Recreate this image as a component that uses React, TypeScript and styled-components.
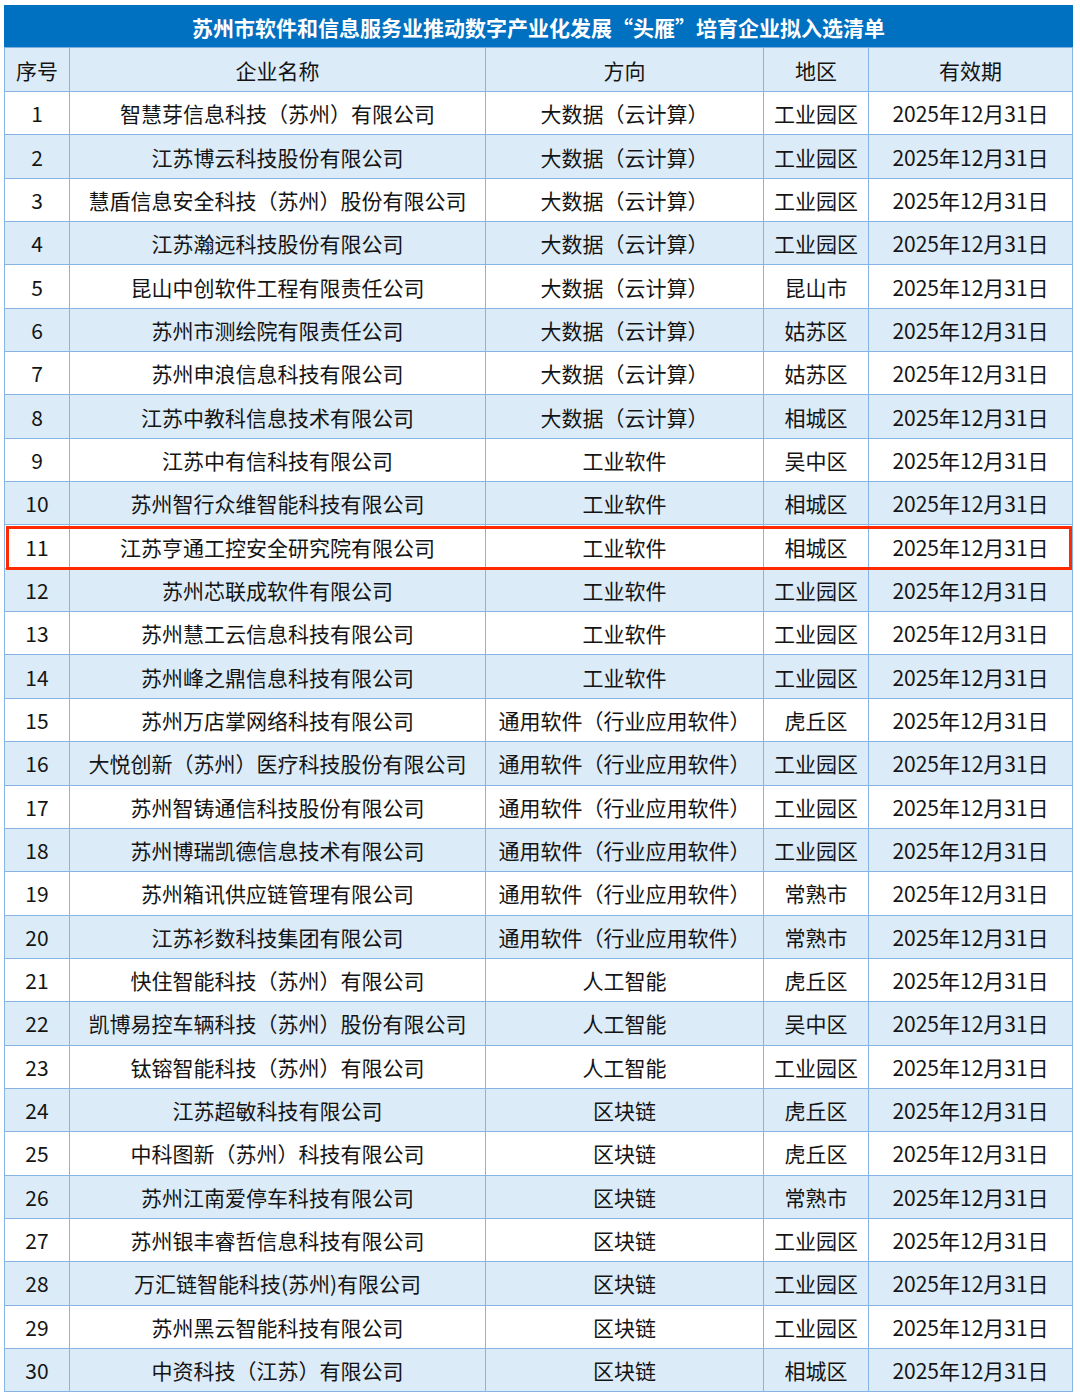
import styled, { createGlobalStyle } from "styled-components";

const GlobalStyle = createGlobalStyle`
  body {
    margin: 0;
    background: #ffffff;
    font-family: "Noto Sans CJK SC", "Noto Sans", sans-serif;
  }
`;

const ROW_H = 43.35;
const TITLE_H = 41;
const HEAD_H = 43;
// rendered heights come out a bit taller than the set ones (borders)
const TITLE_REAL = 43;
const HEAD_REAL = 44;

const Wrapper = styled.div`
  position: relative;
  margin: 5px 0 0 4px;
  width: 1068px;
`;

const Table = styled.table`
  width: 1068px;
  border-collapse: collapse;
  table-layout: fixed;
  color: #141414;
  font-size: 21px;
`;

const TitleCell = styled.th`
  height: ${TITLE_H}px;
  padding: 0;
  background: #0070c0;
  color: #ffffff;
  font-size: 21px;
  font-weight: 700;
  text-align: center;
  border: 1px solid #0070c0;
  border-bottom: 1px solid #7fb0e0;
`;

const HeadCell = styled.th`
  height: ${HEAD_H}px;
  padding: 0;
  background: #dcebf8;
  font-weight: 400;
  text-align: center;
  border: 1.5px solid #86b4e4;
`;

const Row = styled.tr<{ $alt: boolean }>`
  height: ${ROW_H}px;
  background: ${({ $alt }) => ($alt ? "#dcebf8" : "#ffffff")};
`;

const Cell = styled.td`
  padding: 0;
  text-align: center;
  white-space: nowrap;
  border: 1.5px solid #86b4e4;
`;

const Highlight = styled.div<{ $index: number }>`
  position: absolute;
  left: 2px;
  right: 0;
  top: ${({ $index }) => TITLE_REAL + HEAD_REAL + $index * ROW_H}px;
  height: ${ROW_H + 1}px;
  border: 3px solid #ff2a00;
  box-sizing: border-box;
  pointer-events: none;
`;

const DATE = "2025年12月31日";

const rows: [string, string, string][] = [
  ["智慧芽信息科技（苏州）有限公司", "大数据（云计算）", "工业园区"],
  ["江苏博云科技股份有限公司", "大数据（云计算）", "工业园区"],
  ["慧盾信息安全科技（苏州）股份有限公司", "大数据（云计算）", "工业园区"],
  ["江苏瀚远科技股份有限公司", "大数据（云计算）", "工业园区"],
  ["昆山中创软件工程有限责任公司", "大数据（云计算）", "昆山市"],
  ["苏州市测绘院有限责任公司", "大数据（云计算）", "姑苏区"],
  ["苏州申浪信息科技有限公司", "大数据（云计算）", "姑苏区"],
  ["江苏中教科信息技术有限公司", "大数据（云计算）", "相城区"],
  ["江苏中有信科技有限公司", "工业软件", "吴中区"],
  ["苏州智行众维智能科技有限公司", "工业软件", "相城区"],
  ["江苏亨通工控安全研究院有限公司", "工业软件", "相城区"],
  ["苏州芯联成软件有限公司", "工业软件", "工业园区"],
  ["苏州慧工云信息科技有限公司", "工业软件", "工业园区"],
  ["苏州峰之鼎信息科技有限公司", "工业软件", "工业园区"],
  ["苏州万店掌网络科技有限公司", "通用软件（行业应用软件）", "虎丘区"],
  ["大悦创新（苏州）医疗科技股份有限公司", "通用软件（行业应用软件）", "工业园区"],
  ["苏州智铸通信科技股份有限公司", "通用软件（行业应用软件）", "工业园区"],
  ["苏州博瑞凯德信息技术有限公司", "通用软件（行业应用软件）", "工业园区"],
  ["苏州箱讯供应链管理有限公司", "通用软件（行业应用软件）", "常熟市"],
  ["江苏衫数科技集团有限公司", "通用软件（行业应用软件）", "常熟市"],
  ["快住智能科技（苏州）有限公司", "人工智能", "虎丘区"],
  ["凯博易控车辆科技（苏州）股份有限公司", "人工智能", "吴中区"],
  ["钛镕智能科技（苏州）有限公司", "人工智能", "工业园区"],
  ["江苏超敏科技有限公司", "区块链", "虎丘区"],
  ["中科图新（苏州）科技有限公司", "区块链", "虎丘区"],
  ["苏州江南爱停车科技有限公司", "区块链", "常熟市"],
  ["苏州银丰睿哲信息科技有限公司", "区块链", "工业园区"],
  ["万汇链智能科技(苏州)有限公司", "区块链", "工业园区"],
  ["苏州黑云智能科技有限公司", "区块链", "工业园区"],
  ["中资科技（江苏）有限公司", "区块链", "相城区"],
];

const HIGHLIGHTED = 10;

export default function App() {
  return (
    <>
      <GlobalStyle />
      <Wrapper>
        <Table>
          <colgroup>
            <col style={{ width: 65 }} />
            <col style={{ width: 416 }} />
            <col style={{ width: 278 }} />
            <col style={{ width: 105 }} />
            <col style={{ width: 204 }} />
          </colgroup>
          <thead>
            <tr>
              <TitleCell colSpan={5}>
                苏州市软件和信息服务业推动数字产业化发展“头雁”培育企业拟入选清单
              </TitleCell>
            </tr>
            <tr>
              <HeadCell>序号</HeadCell>
              <HeadCell>企业名称</HeadCell>
              <HeadCell>方向</HeadCell>
              <HeadCell>地区</HeadCell>
              <HeadCell>有效期</HeadCell>
            </tr>
          </thead>
          <tbody>
            {rows.map(([name, dir, area], i) => (
              <Row key={i} $alt={i % 2 === 1 && i !== HIGHLIGHTED}>
                <Cell>{i + 1}</Cell>
                <Cell>{name}</Cell>
                <Cell>{dir}</Cell>
                <Cell>{area}</Cell>
                <Cell>{DATE}</Cell>
              </Row>
            ))}
          </tbody>
        </Table>
        <Highlight $index={HIGHLIGHTED} />
      </Wrapper>
    </>
  );
}
